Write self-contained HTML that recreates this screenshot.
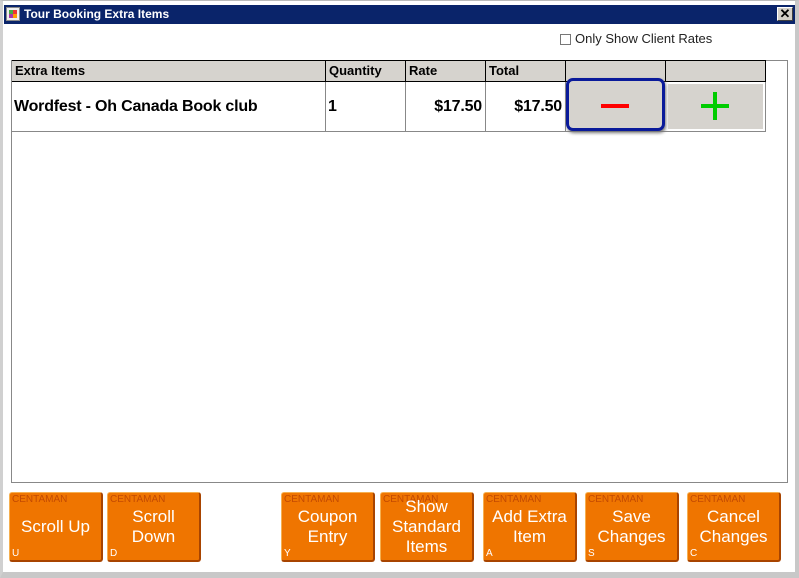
<!DOCTYPE html>
<html><head><style>
*{margin:0;padding:0;box-sizing:border-box}
body{width:799px;height:578px;background:#fff;position:relative;overflow:hidden;font-family:"Liberation Sans",Arial,sans-serif}
.abs{position:absolute}
.btn{position:absolute;top:492px;width:94px;height:70px;background:#ef7500;border:1px solid #f6b050;border-right:2px solid #a84400;border-bottom:2px solid #a84400;border-radius:3px;color:#fff;text-align:center;font-size:17px;line-height:20px}
.btn .c{position:absolute;left:2px;top:2px;font-size:10px;color:#c34a00;line-height:10px}
.btn .k{position:absolute;left:2px;bottom:1px;font-size:10px;line-height:10px}
.btn .t{position:absolute;left:0;right:0;top:50%;transform:translateY(-50%)}
.hd{position:absolute;top:61px;height:20px;background:#d6d3ce;font-size:13px;font-weight:bold;line-height:20px;padding-left:3px;border-right:1px solid #000}
.cell{position:absolute;top:82px;height:49px;font-size:16px;font-weight:bold;line-height:49px;border-right:1px solid #888;letter-spacing:-0.2px}
</style></head><body>
<div class="abs" style="left:0;top:0;width:799px;height:578px;background:#fff;border:1px solid #bbb;border-left:3px solid #d0d0d0;border-right:4px solid #c8c8c8;border-bottom:6px solid #c8c8c8"></div>
<div class="abs" style="left:4px;top:5px;width:791px;height:19px;background:#0a246a;color:#fff;font-size:12px;font-weight:bold;line-height:19px;padding-left:20px">Tour Booking Extra Items</div>
<div class="abs" style="left:6px;top:7px;width:14px;height:14px;background:#eee;border:1px solid #888">
<div class="abs" style="left:2px;top:2px;width:4px;height:4px;background:#4a4"></div><div class="abs" style="left:6px;top:2px;width:4px;height:4px;background:#e33"></div><div class="abs" style="left:2px;top:6px;width:4px;height:4px;background:#a3a"></div><div class="abs" style="left:6px;top:6px;width:4px;height:4px;background:#f90"></div></div>
<div class="abs" style="left:777px;top:7px;width:16px;height:14px;background:#d4d0c8;border:1px solid #fff;border-right-color:#404040;border-bottom-color:#404040;font-size:13px;line-height:12px;text-align:center;font-weight:bold">✕</div>
<div class="abs" style="left:560px;top:34px;width:11px;height:11px;border:1px solid #777"></div>
<div class="abs" style="left:575px;top:31px;font-size:13px;color:#222">Only Show Client Rates</div>
<div class="abs" style="left:11px;top:60px;width:777px;height:423px;border:1px solid #888"></div>
<div class="abs" style="left:12px;top:60px;width:754px;height:22px;border-top:1px solid #000;border-bottom:1px solid #000;border-left:1px solid #000"></div>
<div class="hd" style="left:12px;width:314px">Extra Items</div>
<div class="hd" style="left:326px;width:80px">Quantity</div>
<div class="hd" style="left:406px;width:80px">Rate</div>
<div class="hd" style="left:486px;width:80px">Total</div>
<div class="hd" style="left:566px;width:100px"></div>
<div class="hd" style="left:666px;width:100px"></div>
<div class="cell" style="left:12px;width:314px;padding-left:2px">Wordfest - Oh Canada Book club</div>
<div class="cell" style="left:326px;width:80px;padding-left:2px">1</div>
<div class="cell" style="left:406px;width:80px;text-align:right;padding-right:3px">$17.50</div>
<div class="cell" style="left:486px;width:80px;text-align:right;padding-right:3px">$17.50</div>
<div class="cell" style="left:566px;width:200px"></div>
<div class="abs" style="left:12px;top:131px;width:754px;height:1px;background:#888"></div>
<div class="abs" style="left:566px;top:78px;width:99px;height:53px;background:#d6d3ce;border:3px solid #0a1a9a;border-radius:7px;box-shadow:1px 2px 3px #777"></div>
<div class="abs" style="left:601px;top:104px;width:28px;height:4px;background:#f00"></div>
<div class="abs" style="left:668px;top:84px;width:95px;height:45px;background:#d6d3ce"></div>
<div class="abs" style="left:701px;top:104px;width:28px;height:4px;background:#0c0"></div>
<div class="abs" style="left:713px;top:92px;width:4px;height:28px;background:#0c0"></div>
<div class="btn" style="left:9px"><span class="c">CENTAMAN</span><span class="t">Scroll Up</span><span class="k">U</span></div>
<div class="btn" style="left:107px"><span class="c">CENTAMAN</span><span class="t">Scroll<br>Down</span><span class="k">D</span></div>
<div class="btn" style="left:281px"><span class="c">CENTAMAN</span><span class="t">Coupon<br>Entry</span><span class="k">Y</span></div>
<div class="btn" style="left:380px"><span class="c">CENTAMAN</span><span class="t">Show<br>Standard<br>Items</span></div>
<div class="btn" style="left:483px"><span class="c">CENTAMAN</span><span class="t">Add Extra<br>Item</span><span class="k">A</span></div>
<div class="btn" style="left:585px"><span class="c">CENTAMAN</span><span class="t">Save<br>Changes</span><span class="k">S</span></div>
<div class="btn" style="left:687px"><span class="c">CENTAMAN</span><span class="t">Cancel<br>Changes</span><span class="k">C</span></div>
</body></html>
